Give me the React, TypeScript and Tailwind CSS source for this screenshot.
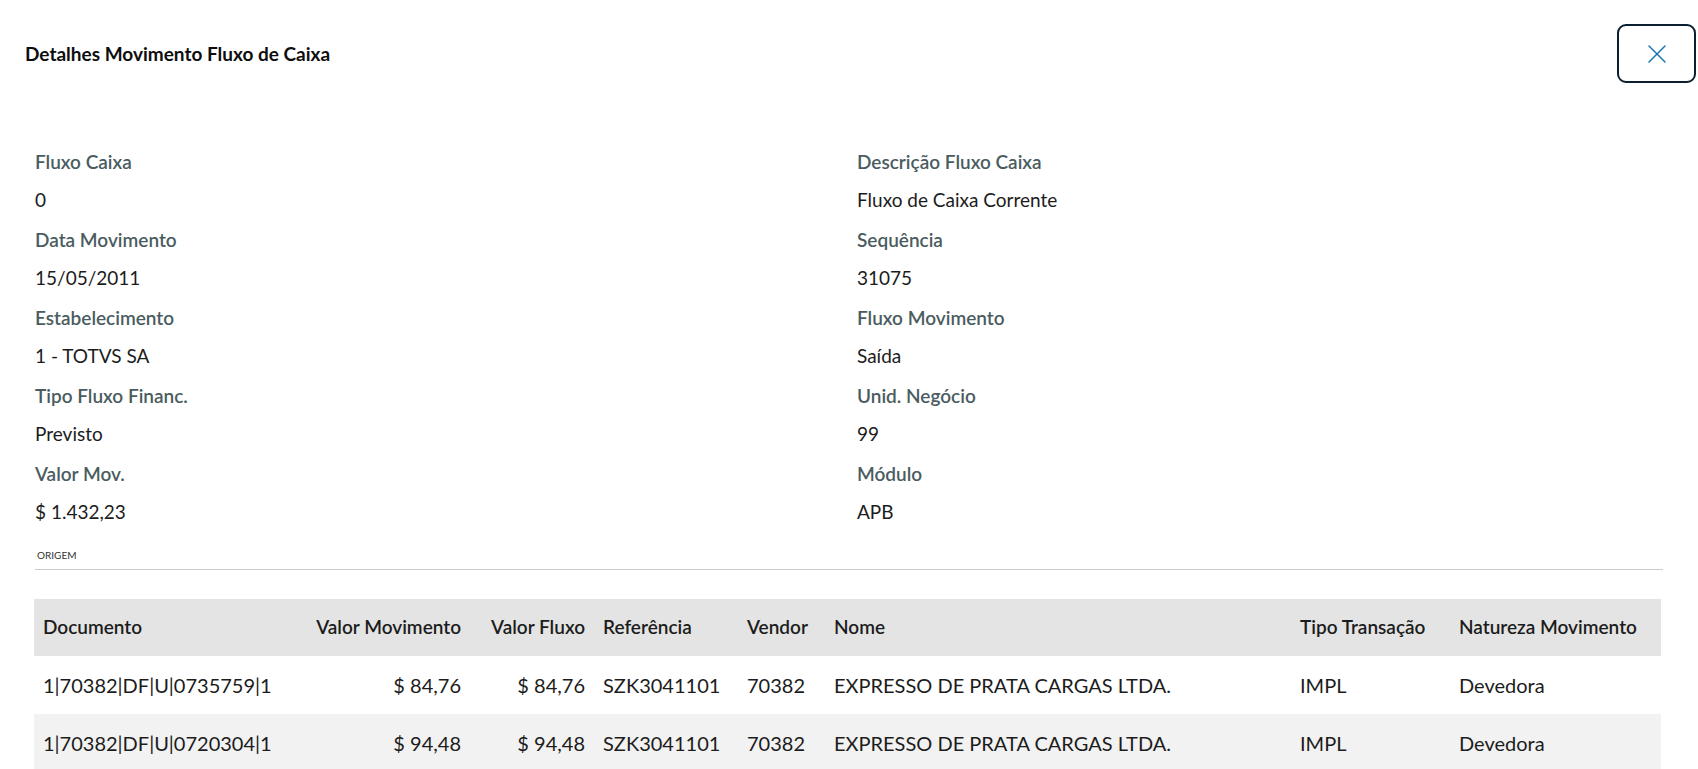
import { X } from 'lucide-react';

const fields: [string, string][] = [
  ['Fluxo Caixa', '0'],
  ['Descrição Fluxo Caixa', 'Fluxo de Caixa Corrente'],
  ['Data Movimento', '15/05/2011'],
  ['Sequência', '31075'],
  ['Estabelecimento', '1 - TOTVS SA'],
  ['Fluxo Movimento', 'Saída'],
  ['Tipo Fluxo Financ.', 'Previsto'],
  ['Unid. Negócio', '99'],
  ['Valor Mov.', '$ 1.432,23'],
  ['Módulo', 'APB'],
];

const rows = [
  ['1|70382|DF|U|0735759|1', '$ 84,76', '$ 84,76', 'SZK3041101', '70382', 'EXPRESSO DE PRATA CARGAS LTDA.', 'IMPL', 'Devedora'],
  ['1|70382|DF|U|0720304|1', '$ 94,48', '$ 94,48', 'SZK3041101', '70382', 'EXPRESSO DE PRATA CARGAS LTDA.', 'IMPL', 'Devedora'],
];

const columns: { label: string; width: number; right?: boolean }[] = [
  { label: 'Documento', width: 266 },
  { label: 'Valor Movimento', width: 170, right: true },
  { label: 'Valor Fluxo', width: 124, right: true },
  { label: 'Referência', width: 144 },
  { label: 'Vendor', width: 87 },
  { label: 'Nome', width: 466 },
  { label: 'Tipo Transação', width: 159 },
  { label: 'Natureza Movimento', width: 211 },
];

export default function App() {
  return (
    <div className="min-h-[769px] w-full bg-white font-['Lato','Noto_Sans',sans-serif] text-[#1c1c1c]">
      {/* Header */}
      <div className="flex items-center justify-between pl-[25px] pr-[2px] pt-[24px]">
        <h1 className="text-[19px] font-bold leading-none text-[#0e0e0e]">Detalhes Movimento Fluxo de Caixa</h1>
        <button className="flex h-[59px] w-[79px] items-center justify-center rounded-[9px] border-2 border-[#0b1f30] text-[#1677b0]">
          <X className="h-[32px] w-[32px]" strokeWidth={1.1} />
        </button>
      </div>

      {/* Fields */}
      <div className="mt-[59px] grid grid-cols-[822px_1fr] pl-[35px]">
        {fields.map(([label, value]) => (
          <div key={label}>
            <div className="h-[39px] text-[19px] font-semibold leading-[39px] text-[#4a5c60]">{label}</div>
            <div className="h-[39px] text-[19px] leading-[38px]">{value}</div>
          </div>
        ))}
      </div>

      {/* Origem divider */}
      <div className="mx-[35px] mt-[17px] border-b border-[#cccccc] pb-[8px] pl-[2px] text-[10px] leading-[12px] text-[#333333]">
        ORIGEM
      </div>

      {/* Table */}
      <div className="ml-[34px] mt-[29px] w-[1627px]">
        <table className="w-full table-fixed border-collapse">
          <colgroup>
            {columns.map((c) => (
              <col key={c.label} style={{ width: c.width }} />
            ))}
          </colgroup>
          <thead>
            <tr className="h-[57px] bg-[#e4e4e4]">
              {columns.map((c) => (
                <th
                  key={c.label}
                  className={`px-[9px] text-[19px] font-semibold whitespace-nowrap ${c.right ? 'text-right' : 'text-left'}`}
                >
                  {c.label}
                </th>
              ))}
            </tr>
          </thead>
          <tbody>
            {rows.map((r, i) => (
              <tr key={i} className={`h-[58px] ${i % 2 === 1 ? 'bg-[#f2f2f2]' : 'bg-white'}`}>
                {r.map((cell, j) => (
                  <td
                    key={j}
                    className={`px-[9px] text-[20px] whitespace-nowrap ${columns[j].right ? 'text-right' : 'text-left'}`}
                  >
                    {cell}
                  </td>
                ))}
              </tr>
            ))}
          </tbody>
        </table>
      </div>
    </div>
  );
}
